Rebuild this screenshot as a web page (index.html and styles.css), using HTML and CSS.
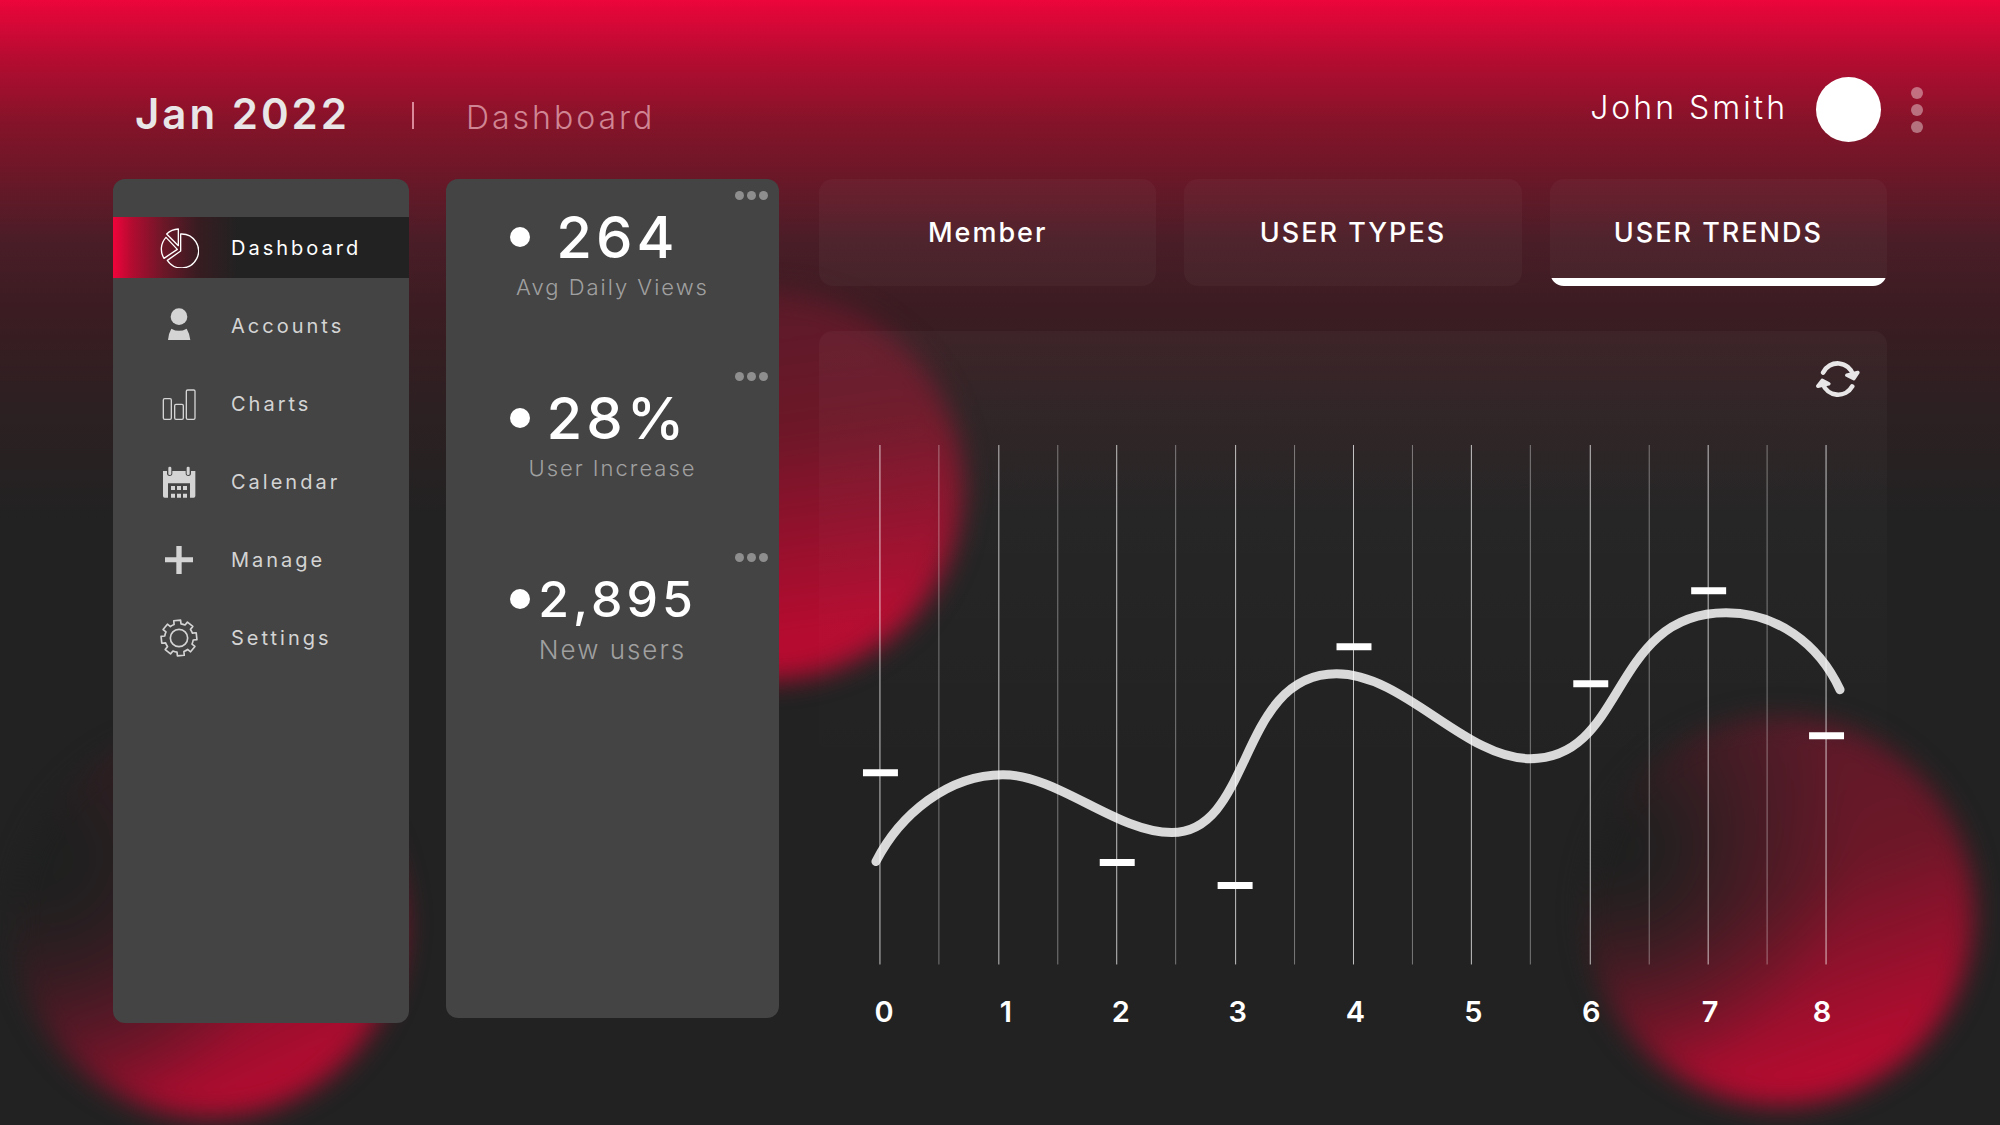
FILE: index.html
```html
<!DOCTYPE html>
<html lang="en">
<head>
<meta charset="utf-8">
<meta name="viewport" content="width=device-width, initial-scale=1">
<title>Dashboard</title>
<link rel="stylesheet" href="styles.css">
</head>
<body>
<div class="page">
  <div class="backdrop" aria-hidden="true">
    <div class="blob blob-left"></div>
    <div class="blob blob-middle"></div>
    <div class="blob blob-right"></div>
  </div>

  <header class="header">
    <div class="heading">
      <h1 class="period">Jan 2022</h1>
      <span class="divider"></span>
      <p class="section-name">Dashboard</p>
    </div>
    <div class="user">
      <span class="user-name">John Smith</span>
      <span class="avatar"></span>
      <button class="dots dots-vertical" aria-label="User menu"><i></i><i></i><i></i></button>
    </div>
  </header>

  <main class="content">
    <nav class="sidebar" aria-label="Main">
      <a class="nav-item active" href="#">
        <svg class="nav-icon" viewBox="177 79 120 120" fill="none" stroke="currentColor" stroke-width="4" stroke-linejoin="round">
          <path d="M242 97A51 51 0 1 1 202 176L242 148Z"/>
          <path d="M198 107A52 52 0 0 0 192 170L232 143Z"/>
          <path d="M235 82A52 52 0 0 0 200 97L235 132Z"/>
        </svg>
        <span>Dashboard</span>
      </a>
      <a class="nav-item" href="#">
        <svg class="nav-icon" viewBox="177 321 120 120" fill="currentColor">
          <circle cx="237" cy="353" r="25"/>
          <path d="M214 389Q237 402 260 389Q268 402 271 423H204Q206 402 214 389Z"/>
        </svg>
        <span>Accounts</span>
      </a>
      <a class="nav-item" href="#">
        <svg class="nav-icon" viewBox="177 549 120 120" fill="none" stroke="currentColor" stroke-width="4">
          <rect x="190" y="593" width="24" height="62" rx="4"/>
          <rect x="224" y="610" width="26" height="45" rx="4"/>
          <rect x="259" y="567" width="26" height="88" rx="4"/>
        </svg>
        <span>Charts</span>
      </a>
      <a class="nav-item" href="#">
        <svg class="nav-icon" viewBox="177 66 120 120" fill="currentColor">
          <path d="M189 93H201V100A8 8 0 0 0 217 100V93H257V100A8 8 0 0 0 273 100V93H286V168Q286 173 281 173H270V130H204V173H194Q189 173 189 168Z"/>
          <rect x="205" y="80" width="9" height="25" rx="4"/>
          <rect x="260" y="80" width="9" height="25" rx="4"/>
          <path d="M213 138h12v12h-12zM231 138h12v12h-12zM249 138h12v12h-12zM213 161h12v12h-12zM231 161h12v12h-12zM249 161h12v12h-12z"/>
        </svg>
        <span>Calendar</span>
      </a>
      <a class="nav-item" href="#">
        <svg class="nav-icon" viewBox="177 302 120 120" fill="currentColor">
          <path d="M229 320h16v34h34v15h-34v35h-16v-35h-34v-15h34z"/>
        </svg>
        <span>Manage</span>
      </a>
      <a class="nav-item" href="#">
        <svg class="nav-icon" viewBox="-60 -60 120 120" fill="none" stroke="currentColor" stroke-width="5" stroke-linejoin="round">
          <circle r="26"/>
          <path transform="rotate(-6)" d="M41.7-10.4L53-10.3V10.3L41.7 10.4A43 43 0 0 1 36.9 22.1L44.8 30.2L30.2 44.8L22.1 36.9A43 43 0 0 1 10.4 41.7L10.3 53H-10.3L-10.4 41.7A43 43 0 0 1-22.1 36.9L-30.2 44.8L-44.8 30.2L-36.9 22.1A43 43 0 0 1-41.7 10.4L-53 10.3V-10.3L-41.7-10.4A43 43 0 0 1-36.9-22.1L-44.8-30.2L-30.2-44.8L-22.1-36.9A43 43 0 0 1-10.4-41.7L-10.3-53H10.3L10.4-41.7A43 43 0 0 1 22.1-36.9L30.2-44.8L44.8-30.2L36.9-22.1A43 43 0 0 1 41.7-10.4Z"/>
        </svg>
        <span>Settings</span>
      </a>
    </nav>

    <section class="stats" aria-label="Statistics">
      <article class="stat">
        <button class="dots" aria-label="Daily views options"><i></i><i></i><i></i></button>
        <div class="figure"><span class="bullet"></span><strong class="value">264</strong></div>
        <p class="caption">Avg Daily Views</p>
      </article>
      <article class="stat">
        <button class="dots" aria-label="User increase options"><i></i><i></i><i></i></button>
        <div class="figure"><span class="bullet"></span><strong class="value">28%</strong></div>
        <p class="caption">User Increase</p>
      </article>
      <article class="stat">
        <button class="dots" aria-label="New users options"><i></i><i></i><i></i></button>
        <div class="figure"><span class="bullet"></span><strong class="value value-long">2,895</strong></div>
        <p class="caption caption-large">New users</p>
      </article>
    </section>

    <section class="trends">
      <div class="tabs" role="tablist">
        <button class="tab" role="tab">Member</button>
        <button class="tab" role="tab">USER TYPES</button>
        <button class="tab selected" role="tab" aria-selected="true">USER TRENDS</button>
      </div>
      <div class="panel">
        <div class="panel-tools">
          <button class="refresh" aria-label="Refresh">
            <svg viewBox="829 903 132 112" width="44" height="37" fill="none" stroke="currentColor" stroke-linecap="round" stroke-linejoin="round">
              <path stroke-width="14" d="M850 938A49 49 0 0 1 941 945M938 980A49 49 0 0 1 849 972"/>
              <path stroke-width="11" fill="currentColor" d="M922 946L955 938L943 956ZM834 979L847 962L867 972Z"/>
            </svg>
          </button>
        </div>
        <svg class="chart" viewBox="0 0 1069 608" role="img" aria-label="User trends">
          <path class="curve" d="M57 447C81 400 129 360 184 360C239 360 298 418 353 418C435 418 419 259 518 259C586 259 646 344 712 344C809 344 791 198 908 198C958 198 1000 228 1022 275"/>
          <g class="grid-major">
            <path d="M61 30V550M180 30V550M298 30V550M417 30V550M535 30V550M653 30V550M772 30V550M890 30V550M1008 30V550"/>
          </g>
          <g class="grid-minor">
            <path d="M120 30V550M239 30V550M357 30V550M476 30V550M594 30V550M712 30V550M831 30V550M949 30V550"/>
          </g>
          <path class="marks" d="M44 358h35M281 448h35M399 471h35M518 232h35M755 269h35M873 176h35M991 321h35"/>
          <g class="axis">
            <text x="65" y="608">0</text>
            <text x="187" y="608">1</text>
            <text x="302" y="608">2</text>
            <text x="419" y="608">3</text>
            <text x="537" y="608">4</text>
            <text x="655" y="608">5</text>
            <text x="773" y="608">6</text>
            <text x="892" y="608">7</text>
            <text x="1004" y="608">8</text>
          </g>
        </svg>
      </div>
    </section>
  </main>
</div>
</body>
</html>
```
FILE: styles.css
```css
* {
  box-sizing: border-box;
}

body {
  margin: 0;
  background: #222;
  color: #fff;
  font-family: Inter, "Open Sans", sans-serif;
}

h1,
p {
  margin: 0;
}

button {
  padding: 0;
  border: 0;
  background: none;
  color: inherit;
  font: inherit;
  cursor: pointer;
}

.page {
  position: relative;
  z-index: 0;
  display: flex;
  flex-direction: column;
  min-height: 100vh;
  padding-bottom: 102px;
  background: linear-gradient(#ec053a 0, #b40c31 60px, #861329 120px, #6d1728 172px, #4a1d27 240px, #3b1c22 310px, #2c2022 410px, #222 520px);
}

/* Glowing circles behind the panels */
.backdrop {
  position: absolute;
  inset: 0;
  z-index: -1;
  overflow: hidden;
}

.blob {
  position: absolute;
  width: 388px;
  height: 388px;
  border-radius: 50%;
  filter: blur(13px);
}

.blob-left {
  left: 15px;
  bottom: 8px;
  background:
    radial-gradient(circle at 8% 34%, #1d201f 0, #1d201fdd 14%, #1d201f88 32%, #1d201f00 60%),
    linear-gradient(155deg, #4a1a26 12%, #5e1728 42%, #b60b30 86%);
}

.blob-middle {
  left: 575px;
  top: 292px;
  background: linear-gradient(172deg, #5e1a29 12%, #6d1728 38%, #b60b30 84%);
}

.blob-right {
  right: 26px;
  bottom: 20px;
  background:
    radial-gradient(circle at 8% 34%, #1d201f 0, #1d201fdd 12%, #1d201f77 30%, #1d201f00 54%),
    linear-gradient(160deg, #5a1a29 12%, #6d1728 46%, #b60b30 84%);
}

.header {
  display: flex;
  justify-content: space-between;
  align-items: center;
  height: 179px;
  padding: 40px 77px 0 135px;
}

.heading {
  display: flex;
  align-items: baseline;
  padding-top: 8px;
}

.period {
  color: #e8e6e6;
  font-size: 42px;
  font-weight: 600;
  line-height: 48px;
  letter-spacing: 3px;
}

.divider {
  width: 2px;
  height: 27px;
  margin: 0 52px 0 62px;
  background: #d9899a;
}

.section-name {
  color: #d08594;
  font-size: 32px;
  font-weight: 300;
  letter-spacing: 3px;
}

.user {
  display: flex;
  align-items: center;
}

.user-name {
  padding-bottom: 4px;
  font-size: 32px;
  font-weight: 300;
  letter-spacing: 3px;
}

.avatar {
  width: 65px;
  height: 65px;
  margin: 0 30px 0 28px;
  border-radius: 50%;
  background: #fff;
}

.dots {
  display: flex;
  gap: 3px;
}

.dots i {
  width: 9px;
  height: 9px;
  border-radius: 50%;
  background: #8e8e8e;
}

.dots-vertical {
  flex-direction: column;
  gap: 5px;
}

.dots-vertical i {
  width: 12px;
  height: 12px;
  background: #ffffff66;
}

.content {
  flex: 1;
  display: grid;
  grid-template-columns: 296px 333px minmax(0, 1fr);
  gap: 37px;
  padding: 0 113px;
}

.sidebar,
.stats {
  border-radius: 12px;
  background: #444;
}

.sidebar {
  display: flex;
  flex-direction: column;
  gap: 17px;
  padding-top: 38px;
}

.nav-item {
  display: flex;
  align-items: center;
  gap: 32px;
  height: 61px;
  padding-left: 46px;
  color: #d4d4d4;
  font-size: 20px;
  letter-spacing: 3px;
  text-decoration: none;
}

.nav-item.active {
  background: linear-gradient(90deg, #f0033a 0, #b00c30 20px, #6d1728 50px, #371c21 85px, #222 125px);
  color: #fff;
}

.nav-icon {
  width: 40px;
  height: 40px;
}

.stats {
  display: flex;
  flex-direction: column;
  margin-bottom: 5px;
  padding-top: 12px;
}

.stat {
  display: flex;
  flex-direction: column;
  height: 181px;
}

.stat .dots {
  align-self: flex-end;
  margin-right: 11px;
}

.figure {
  display: flex;
  align-items: center;
  height: 74px;
  padding: 0 74px 0 64px;
}

.bullet {
  width: 20px;
  height: 20px;
  border-radius: 50%;
  background: #fff;
}

.value {
  flex: 1;
  font-size: 58px;
  font-weight: 500;
  letter-spacing: 4px;
  text-align: center;
}

.value-long {
  font-size: 50px;
}

.caption {
  color: #a0a0a0;
  font-size: 22px;
  font-weight: 300;
  line-height: 26px;
  letter-spacing: 2px;
  text-align: center;
}

.caption-large {
  font-size: 26px;
  line-height: 28px;
}

.trends {
  display: flex;
  flex-direction: column;
  gap: 45px;
  margin-left: 3px;
}

.tabs {
  display: grid;
  grid-template-columns: repeat(3, 1fr);
  gap: 28px;
}

.tab {
  position: relative;
  height: 107px;
  overflow: hidden;
  border-radius: 14px;
  background: #ffffff08;
  font-size: 27px;
  font-weight: 500;
  letter-spacing: 2px;
}

.tab.selected::after {
  content: "";
  position: absolute;
  inset: auto 0 0;
  height: 8px;
  background: #fff;
}

.panel {
  flex: 1;
  border-radius: 14px;
  background: linear-gradient(#ffffff08, #ffffff00 65%);
}

.panel-tools {
  display: flex;
  justify-content: flex-end;
  height: 84px;
  padding: 30px 27px 0;
}

.refresh {
  width: 44px;
  height: 37px;
  color: #e8e6e6;
}

.chart {
  display: block;
  width: 100%;
  overflow: visible;
}

.curve {
  fill: none;
  stroke: #d9d9d9;
  stroke-width: 9;
  stroke-linecap: round;
}

.grid-major {
  stroke: #ffffffbb;
}

.grid-minor {
  stroke: #ffffff66;
}

.marks {
  stroke: #fff;
  stroke-width: 7;
}

.axis {
  fill: #fff;
  font-size: 29px;
  font-weight: 600;
  text-anchor: middle;
}
```
